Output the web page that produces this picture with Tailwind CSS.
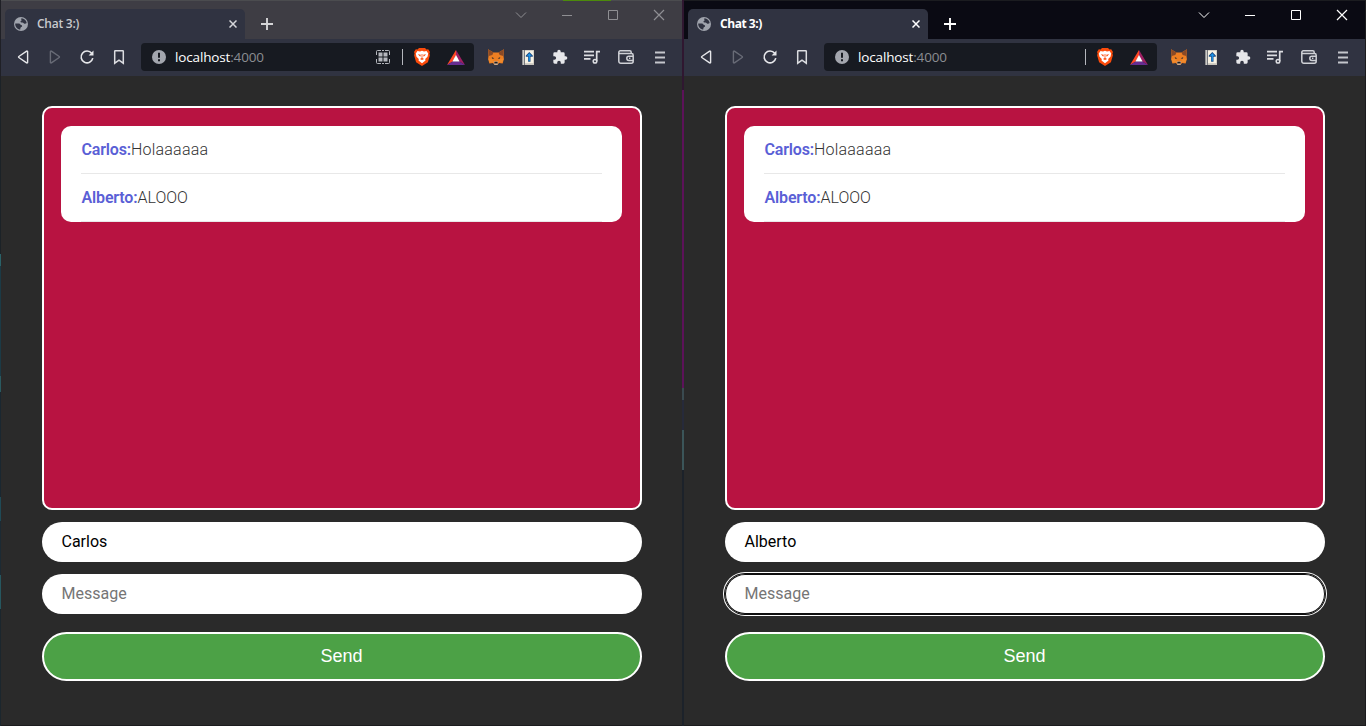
<!DOCTYPE html>
<html lang="en">
<head>
<meta charset="utf-8">
<title>Chat 3:)</title>
<script src="https://cdn.jsdelivr.net/npm/@tailwindcss/browser@4"></script>
</head>
<body class="relative flex h-[726px] w-[1366px] overflow-hidden bg-[#1c1c1e] font-['Roboto',sans-serif]">
<svg class="hidden">
  <symbol id="globe" viewBox="0 0 14 14"><circle cx="7" cy="7" r="7" fill="#9fa3ac"/><path d="M7.600 1.300c2.600.2 4.600 2 5.100 4.600-.8.900-2 .9-2.700.6-.8-.4-1.100-.9-2-.9-.9-.1-1.700-.4-1.500-1.200.2-.7 1.200-.5 1.200-1.100 0-.6-.8-.8-.6-1.300zM1.300 6.400l3.700.2c1 .1 1.600.8 1.600 1.400.9 0 1.600.500 1.500 1.300-.1.800-1.500.9-1.700 1.700l-.1 1.600C3.400 12.400 1.200 9.900 1.200 7z" fill="#303341"/></symbol>
  <symbol id="tabx" viewBox="0 0 8 8"><path d="M.5.5l7 7M7.500.5l-7 7" stroke="currentColor" stroke-width="1.500"/></symbol>
  <symbol id="plus" viewBox="0 0 12 12"><path d="M6 0v12M0 6h12" stroke="currentColor" stroke-width="1.900"/></symbol>
  <symbol id="down" viewBox="0 0 12 12"><path d="M1 3.500l5 5 5-5" fill="none" stroke="currentColor"/></symbol>
  <symbol id="min" viewBox="0 0 12 12"><path d="M1 6.500h10" stroke="currentColor"/></symbol>
  <symbol id="max" viewBox="0 0 12 12"><path d="M1.500 1.500h9v9h-9z" fill="none" stroke="currentColor"/></symbol>
  <symbol id="close" viewBox="0 0 12 12"><path d="M1 1l10 10M11 1L1 11" stroke="currentColor" stroke-width="1.200"/></symbol>
  <symbol id="back" viewBox="0 0 16 16"><path d="M12.600 2.600v10.800a.6.6 0 0 1-1 .4L3.800 8.500a.6.6 0 0 1 0-1l7.800-5.300a.6.6 0 0 1 1 .4z" fill="none" stroke="currentColor" stroke-width="1.400"/></symbol>
  <symbol id="reload" viewBox="0 0 16 16"><path d="M13.800 9.200A5.900 5.900 0 1 1 12.700 4.300" fill="none" stroke="#e6e7ea" stroke-width="1.600"/><path d="M14.500 1.600v4.900H9.600z" fill="#e6e7ea"/></symbol>
  <symbol id="mark" viewBox="0 0 16 16"><path d="M3.700 2.300a.6.6 0 0 1 .6-.6h7.400a.6.6 0 0 1 .6.6v11.900L8 11.200l-4.300 3z" fill="none" stroke="#dcdde1" stroke-width="1.500"/></symbol>
  <symbol id="info" viewBox="0 0 16 16"><circle cx="8" cy="8" r="7" fill="#a3a6ae"/><path d="M8 3.800v4.900M8 10.300v2" stroke="#171a21" stroke-width="2"/></symbol>
  <symbol id="qr" viewBox="0 0 16 16"><path d="M1.500 6V2.500a1 1 0 0 1 1-1H6M10 1.500h3.500a1 1 0 0 1 1 1V6M14.500 10v3.500a1 1 0 0 1-1 1H10M6 14.500H2.500a1 1 0 0 1-1-1V10M7 1.500h2M7 14.500h2" fill="none" stroke="#b5b7bd"/><path d="M3.500 3.500h4v4h-4zM8.500 3.500h4v4h-4zM3.500 8.500h4v4h-4zM8.500 8.500h4v4h-4z" fill="#b5b7bd"/></symbol>
  <symbol id="brave" viewBox="0 0 16 18"><path d="M5 0h6l1.500 1.500 1.700-.2L16 4l-.6 1.600.5 1.600-2 7L8 18l-5.900-3.800-2-7 .5-1.600L0 4l1.800-2.700 1.700.2z" fill="#fb4b0b"/><path d="M3.500 3L6 3.400l2-.6 2 .6 2.500-.4 1.700 2.600-.7 3.200-2.300 2.300.3 1.500-3.500 2.600-3.500-2.600.3-1.500-2.300-2.300-.7-3.200z" fill="#fff"/><path d="M3.800 6.200l3 .5-.5 2zM12.200 6.200l-3 .5.5 2zM7.600 6h.8v4l1.700.9L8 12l-2.100-1.100 1.700-.9z" fill="#fb4b0b"/></symbol>
  <symbol id="bat" viewBox="0 0 18 15"><path d="M9 0L0 15l6-3.800L9 5.500z" fill="#ff4724"/><path d="M9 0l9 15-6-3.800-3-5.700z" fill="#9e1f63"/><path d="M0 15h18l-6-3.800H6z" fill="#662d91"/><path d="M9 5l3.600 6.400H5.400z" fill="#fff"/></symbol>
  <symbol id="fox" viewBox="0 0 16 16"><path d="M0 .3l5.500 3.200h5L16 .3l-.5 6.700.4 3-1.300 4.600-3.500-.6-1.500 1.800H6.400L4.900 14l-3.500.6L.1 10l.4-3z" fill="#ee7f22"/><path d="M0 .3l5.500 3.200L4.300 6 .7 7zM16 .3l-5.500 3.200L11.700 6l3.600 1z" fill="#8a4a26"/><path d="M.5 10h4l.9 2.700-3.700.7zM15.500 10h-4l-.9 2.700 3.700.7z" fill="#f08a2c"/><path d="M3.600 8l2.700 1.300-1.800.6zM12.400 8L9.700 9.300l1.800.6z" fill="#3b322e"/><path d="M5.600 12.500h4.800l-.8 3.200H6.400z" fill="#d3c2b3"/><path d="M6.500 12.700h3l.3 1.700H6.200z" fill="#221c1a"/></symbol>
  <symbol id="book" viewBox="0 0 12 15"><path d="M0 0h12v15H0z" fill="#c9c5bd"/><path d="M0 0h3v15H0z" fill="#77797d"/><path d="M.7 0h1.200v15H.7z" fill="#d7d6d2"/><path d="M3 .8h8.300v12.400H3z" fill="#f7f2e4"/><path d="M7.300 2l3.500 3.600v1.200H8.500v5H6.100v-5H3.800V5.600z" fill="#1d4d86"/><path d="M7.300 3.300l2.300 2.400H7.900v5H6.700v-5H5z" fill="#1d97ec"/></symbol>
  <symbol id="puzzle" viewBox="0 0 24 24"><path d="M20.500 11H19V7a2 2 0 0 0-2-2h-4V3.500a2.500 2.500 0 0 0-5 0V5H4a2 2 0 0 0-2 2v3.800h1.500a2.700 2.700 0 0 1 0 5.400H2V20a2 2 0 0 0 2 2h3.800v-1.500a2.700 2.700 0 0 1 5.400 0V22H17a2 2 0 0 0 2-2v-4h1.500a2.500 2.500 0 0 0 0-5z" fill="#e6e7ea"/></symbol>
  <symbol id="music" viewBox="0 0 16 16"><path d="M0 2.700h10M0 6.300h10M0 9.900h6.500M12.700 12.200V2.700H16" fill="none" stroke="#dcdde1" stroke-width="1.700"/><circle cx="11" cy="12.200" r="1.800" fill="none" stroke="#dcdde1" stroke-width="1.500"/></symbol>
  <symbol id="wallet" viewBox="0 0 16 14"><path d="M13.200 3.600V2.200A1.400 1.400 0 0 0 11.800.8H2.300A1.500 1.500 0 0 0 .8 2.300v8.900a2 2 0 0 0 2 2h10.400a2 2 0 0 0 2-2V5.300a1.700 1.700 0 0 0-1.700-1.700H2.300A1.500 1.500 0 0 1 .8 2.300M15.200 6.200h-4.300a2.100 2.100 0 0 0 0 4.200h4.300M11 8.300h1.400" fill="none" stroke="#cfd1d6" stroke-width="1.500"/></symbol>
  <symbol id="menu" viewBox="0 0 16 16"><path d="M3 3.500h10M3 8.500h10M3 13.500h10" stroke="#c4c6cc" stroke-width="1.800"/></symbol>
</svg>

<!-- desktop strip left of the windows -->
<div class="flex w-px flex-col">
  <i class="h-[80px] bg-[#1f2026]"></i>
  <i class="h-[174px] bg-[#1b2227]"></i>
  <i class="h-3 bg-[#2a6268]"></i>
  <i class="h-[110px] bg-[#1b3a45]"></i>
  <i class="h-4 bg-[#2a5a60]"></i>
  <i class="h-[105px] bg-[#1a2730]"></i>
  <i class="h-6 bg-[#1f4a56]"></i>
  <i class="h-[54px] bg-[#1c2a33]"></i>
  <i class="h-[34px] bg-[#26575f]"></i>
  <i class="flex-1 bg-[#1b262d]"></i>
</div>

<!-- Carlos -->
<section class="flex h-[725px] w-[681px] flex-col bg-[#2a2a2a]">
  <header class="flex h-[39px] shrink-0 border-t border-[#4b4c4f] bg-[#3e3d44] pl-1">
    <div class="mt-2 flex h-[30px] w-60 items-center rounded-t-[5px] bg-[#303341] pr-2 pl-[9px]">
      <svg class="size-[14px]"><use href="#globe"/></svg>
      <span class="ml-[9px] flex-1 font-['Open_Sans',sans-serif] text-[12px] font-semibold tracking-[-0.25px] text-[#c9cacd]">Chat 3:)</span>
      <svg class="size-2 text-[#d5d6da]"><use href="#tabx"/></svg>
    </div>
    <svg class="mt-[17px] ml-4 size-3 text-[#d5d5d7]"><use href="#plus"/></svg>
    <div class="mt-2 mr-[17px] ml-auto flex gap-[34px] text-[#8f8f93]">
      <svg class="size-3"><use href="#down"/></svg>
      <svg class="size-3"><use href="#min"/></svg>
      <svg class="size-3"><use href="#max"/></svg>
      <svg class="size-3"><use href="#close"/></svg>
    </div>
  </header>
  <nav class="flex h-[37px] shrink-0 items-center bg-[#303341] pb-px pl-[14px]">
    <div class="flex gap-4">
      <svg class="size-4 text-[#e6e7ea]"><use href="#back"/></svg>
      <svg class="size-4 -scale-x-100 text-[#686b76]"><use href="#back"/></svg>
      <svg class="size-4"><use href="#reload"/></svg>
      <svg class="size-4"><use href="#mark"/></svg>
    </div>
    <div class="ml-[14px] flex h-7 w-[333px] items-center rounded-[4px] bg-[#171a21] px-[9px]">
      <svg class="ml-px size-4"><use href="#info"/></svg>
      <span class="ml-2 flex-1 font-['Open_Sans',sans-serif] text-[13.5px] tracking-[-0.15px] text-[#8b8d92]"><span class="text-white">localhost</span>:4000</span>
      <svg class="size-4"><use href="#qr"/></svg>
      <i class="ml-[11px] h-4 w-px bg-[#b5b7bd]"></i>
      <svg class="ml-[11px] h-[18px] w-4"><use href="#brave"/></svg>
      <svg class="ml-[17px] h-[15px] w-[18px]"><use href="#bat"/></svg>
    </div>
    <div class="ml-[14px] flex items-center gap-4">
      <svg class="size-4"><use href="#fox"/></svg>
      <svg class="mx-0.5 h-[15px] w-3"><use href="#book"/></svg>
      <svg class="size-4"><use href="#puzzle"/></svg>
      <svg class="size-4"><use href="#music"/></svg>
      <svg class="ml-0.5 h-[14px] w-4"><use href="#wallet"/></svg>
      <svg class="ml-0.5 size-4"><use href="#menu"/></svg>
    </div>
  </nav>
  <main class="mt-[30px] ml-[41px] flex w-[600px] flex-col">
    <div class="h-[404px] rounded-[10px] border-2 border-white bg-[#b81341] px-[17px] pt-[18px]">
      <div class="h-24 w-[561px] rounded-[10px] bg-white px-5 text-[16px] font-light text-[#333]">
        <p class="h-12 border-b border-[#e8e8e8] pl-[0.5px] leading-[47px] tracking-[0.2px]"><b class="font-semibold tracking-[-0.15px] text-[#5a5fd6]">Carlos:</b>Holaaaaaa</p>
        <p class="h-12 border-b border-[#e8e8e8] pl-[0.5px] leading-[47px]"><b class="font-semibold tracking-[-0.15px] text-[#5a5fd6]">Alberto:</b>ALOOO</p>
      </div>
    </div>
    <div class="mt-3 h-10 rounded-full bg-white px-[19.5px] text-[16px] leading-[39px] text-black">Carlos</div>
    <div class="mt-3 h-10 rounded-full bg-white px-[19.5px] text-[16px] leading-[39px] text-[#757575]">Message</div>
    <button class="mt-[18px] h-[49px] rounded-full border-2 border-white bg-[#4ca146] pr-px font-['Liberation_Sans',Arial,sans-serif] text-[18px] text-white">Send</button>
  </main>
</section>

<!-- desktop strip visible between the windows -->
<div class="flex w-0.5 flex-col">
  <i class="h-[90px] bg-[#2f1730]"></i>
  <i class="h-[298px] bg-[#5c1259]"></i>
  <i class="h-[12px] bg-[#3a4a50]"></i>
  <i class="h-[30px] bg-[#262a3a]"></i>
  <i class="h-10 bg-[#3b5559]"></i>
  <i class="flex-1 bg-[#1c222a]"></i>
</div>

<!-- Alberto -->
<section class="flex h-[725px] w-[681px] flex-col bg-[#2a2a2a]">
  <header class="flex h-[39px] shrink-0 border-t border-[#1b1c20] bg-[#0a0a13] pl-1">
    <div class="mt-2 flex h-[30px] w-60 items-center rounded-t-[5px] bg-[#303341] pr-2 pl-[9px]">
      <svg class="size-[14px]"><use href="#globe"/></svg>
      <span class="ml-[9px] flex-1 font-['Open_Sans',sans-serif] text-[12px] font-bold tracking-[-0.45px] text-white">Chat 3:)</span>
      <svg class="size-2 text-white"><use href="#tabx"/></svg>
    </div>
    <svg class="mt-[17px] ml-4 size-3 text-white"><use href="#plus"/></svg>
    <div class="mt-2 mr-[17px] ml-auto flex gap-[34px] text-white">
      <svg class="size-3"><use href="#down"/></svg>
      <svg class="size-3"><use href="#min"/></svg>
      <svg class="size-3"><use href="#max"/></svg>
      <svg class="size-3"><use href="#close"/></svg>
    </div>
  </header>
  <nav class="flex h-[37px] shrink-0 items-center bg-[#303341] pb-px pl-[14px]">
    <div class="flex gap-4">
      <svg class="size-4 text-[#e6e7ea]"><use href="#back"/></svg>
      <svg class="size-4 -scale-x-100 text-[#686b76]"><use href="#back"/></svg>
      <svg class="size-4"><use href="#reload"/></svg>
      <svg class="size-4"><use href="#mark"/></svg>
    </div>
    <div class="ml-[14px] flex h-7 w-[333px] items-center rounded-[4px] bg-[#171a21] px-[9px]">
      <svg class="ml-px size-4"><use href="#info"/></svg>
      <span class="ml-2 flex-1 font-['Open_Sans',sans-serif] text-[13.5px] tracking-[-0.15px] text-[#8b8d92]"><span class="text-white">localhost</span>:4000</span>
      <i class="h-4 w-px bg-[#b5b7bd]"></i>
      <svg class="ml-[11px] h-[18px] w-4"><use href="#brave"/></svg>
      <svg class="ml-[17px] h-[15px] w-[18px]"><use href="#bat"/></svg>
    </div>
    <div class="ml-[14px] flex items-center gap-4">
      <svg class="size-4"><use href="#fox"/></svg>
      <svg class="mx-0.5 h-[15px] w-3"><use href="#book"/></svg>
      <svg class="size-4"><use href="#puzzle"/></svg>
      <svg class="size-4"><use href="#music"/></svg>
      <svg class="ml-0.5 h-[14px] w-4"><use href="#wallet"/></svg>
      <svg class="ml-0.5 size-4"><use href="#menu"/></svg>
    </div>
  </nav>
  <main class="mt-[30px] ml-[41px] flex w-[600px] flex-col">
    <div class="h-[404px] rounded-[10px] border-2 border-white bg-[#b81341] px-[17px] pt-[18px]">
      <div class="h-24 w-[561px] rounded-[10px] bg-white px-5 text-[16px] font-light text-[#333]">
        <p class="h-12 border-b border-[#e8e8e8] pl-[0.5px] leading-[47px] tracking-[0.2px]"><b class="font-semibold tracking-[-0.15px] text-[#5a5fd6]">Carlos:</b>Holaaaaaa</p>
        <p class="h-12 border-b border-[#e8e8e8] pl-[0.5px] leading-[47px]"><b class="font-semibold tracking-[-0.15px] text-[#5a5fd6]">Alberto:</b>ALOOO</p>
      </div>
    </div>
    <div class="mt-3 h-10 rounded-full bg-white px-[19.5px] text-[16px] leading-[39px] text-black">Alberto</div>
    <div class="mt-3 h-10 rounded-full bg-white px-[19.5px] text-[16px] leading-[39px] text-[#757575] shadow-[inset_0_0_0_1px_#101010,0_0_0_1px_#101010,0_0_0_2px_#fff]">Message</div>
    <button class="mt-[18px] h-[49px] rounded-full border-2 border-white bg-[#4ca146] pr-px font-['Liberation_Sans',Arial,sans-serif] text-[18px] text-white">Send</button>
  </main>
</section>
<i class="absolute top-0 left-[563px] h-px w-12 bg-[#4c8a0b]"></i>
</body>
</html>
